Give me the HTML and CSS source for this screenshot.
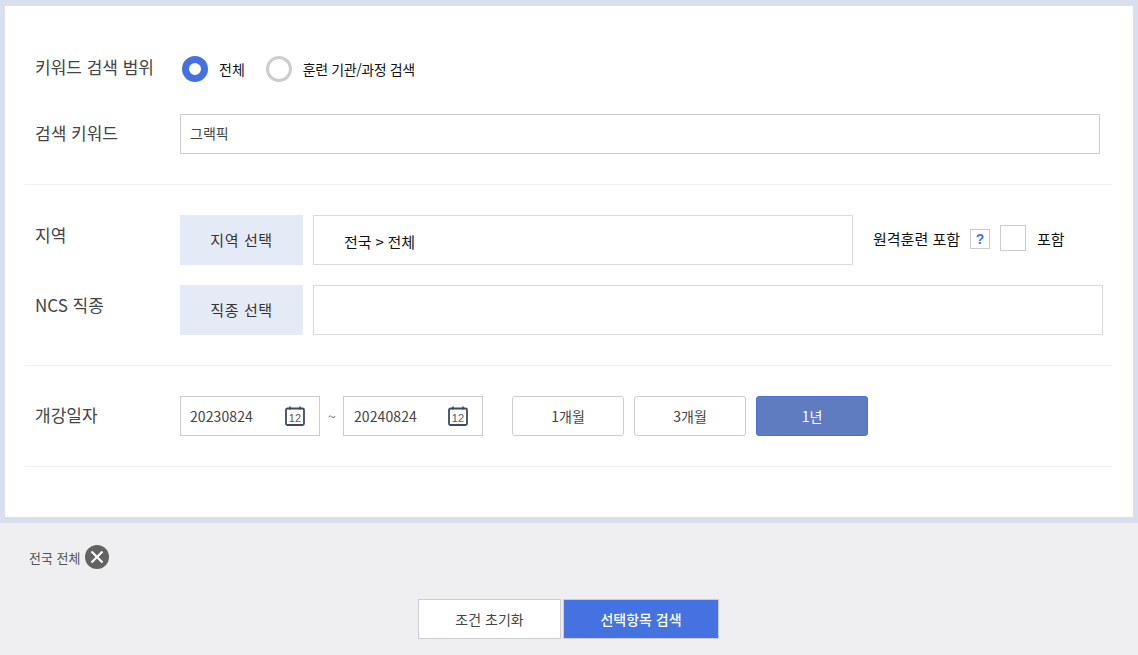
FILE: index.html
```html
<!DOCTYPE html>
<html lang="ko">
<head>
<meta charset="utf-8">
<title>검색</title>
<link rel="stylesheet" href="styles.css">
</head>
<body>
<main class="panel">
  <section class="group group-keyword">
    <div class="row row-scope">
      <div class="label">키워드 검색 범위</div>
      <div class="radios">
        <span class="radio radio-on"></span><span class="radio-text">전체</span>
        <span class="radio radio-off"></span><span class="radio-text radio-text-long">훈련 기관/과정 검색</span>
      </div>
    </div>
    <div class="row row-keyword">
      <div class="label">검색 키워드</div>
      <div class="input input-keyword"><span class="input-text">그랙픽</span></div>
    </div>
  </section>
  <section class="group group-region">
    <div class="row row-region">
      <div class="label label-top">지역</div>
      <div class="pick"><span class="pick-text">지역 선택</span></div>
      <div class="field field-region"><span class="field-text">전국 &gt; 전체</span></div>
      <div class="remote">
        <span>원격훈련 포함</span>
        <span class="help">?</span>
        <span class="check"></span>
        <span class="check-text">포함</span>
      </div>
    </div>
    <div class="row row-ncs">
      <div class="label label-top">NCS 직종</div>
      <div class="pick"><span class="pick-text">직종 선택</span></div>
      <div class="field field-ncs"></div>
    </div>
  </section>
  <section class="group group-date">
    <div class="row">
      <div class="label">개강일자</div>
      <div class="date">
        <span>20230824</span>
        <svg class="cal" viewBox="0 0 20 20" width="20" height="20"><rect x="1" y="2.500" width="18" height="16.500" rx="1.500" fill="none" stroke="#3f4a61" stroke-width="1.800"/><path d="M5 .5v3M15 .5v3" stroke="#3f4a61" stroke-width="1.600"/><text x="10" y="15.500" text-anchor="middle" class="cal-num">12</text></svg>
      </div>
      <span class="tilde">~</span>
      <div class="date date-second">
        <span>20240824</span>
        <svg class="cal" viewBox="0 0 20 20" width="20" height="20"><rect x="1" y="2.500" width="18" height="16.500" rx="1.500" fill="none" stroke="#3f4a61" stroke-width="1.800"/><path d="M5 .5v3M15 .5v3" stroke="#3f4a61" stroke-width="1.600"/><text x="10" y="15.500" text-anchor="middle" class="cal-num">12</text></svg>
      </div>
      <div class="periods">
        <div class="period">1개월</div>
        <div class="period">3개월</div>
        <div class="period period-on">1년</div>
      </div>
    </div>
  </section>
</main>
<footer class="foot">
  <div class="tag">
    <span>전국 전체</span>
    <svg class="tag-x" viewBox="0 0 24 24" width="24" height="24"><circle cx="12" cy="12" r="12" fill="#636363"/><path d="M6.500 6.500l11 11M17.500 6.500l-11 11" stroke="#fff" stroke-width="2.200"/></svg>
  </div>
  <div class="actions">
    <div class="btn btn-reset">조건 초기화</div>
    <div class="btn btn-search">선택항목 검색</div>
  </div>
</footer>
</body>
</html>
```

FILE: styles.css
```css
* { box-sizing: border-box; }
html, body { margin: 0; padding: 0; }
body {
  width: 1138px;
  height: 655px;
  overflow: hidden;
  background: #efeff2;
  font-family: "Noto Sans CJK KR", "Noto Sans", sans-serif;
  color: #111;
  font-size: 14px;
}
.panel {
  height: 523px;
  border: solid #d9dfec;
  border-width: 6px 5px;
  background: #fff;
  padding: 0 21px 0 20px;
}
.group { border-bottom: 1px solid #f0f1f3; }
.group-keyword { height: 179px; padding-top: 42px; }
.group-region { height: 181px; padding-top: 30px; }
.group-date { height: 101px; padding-top: 30px; }
.row { display: flex; align-items: center; }
.row-scope { height: 40px; margin-bottom: 26px; }
.row-region { height: 50px; margin-bottom: 20px; }
.row-ncs { height: 50px; }
.label {
  width: 155px;
  flex: none;
  padding: 0 0 4px 10px;
  font-size: 17px;
  color: #444;
}
.label-top { align-self: flex-start; padding: 7px 0 0 10px; }
.radios { display: flex; align-items: center; margin-top: 1px; }
.radio {
  width: 26px;
  height: 26px;
  border-radius: 50%;
  flex: none;
}
.radio-on { margin-left: 2px; border: 7px solid #4472e0; background: #fff; }
.radio-off { border: 3px solid #cccdd1; background: #fff; margin-left: 21px; }
.radio-text { margin-left: 11px; font-size: 14px; color: #111; }
.radio-text-long { letter-spacing: -0.4px; }
.input {
  width: 920px;
  height: 40px;
  border: 1px solid #ccc;
  display: flex;
  align-items: center;
  padding-left: 9px;
  font-size: 14px;
  color: #444;
}
.input-text { padding-bottom: 2px; }
.pick {
  width: 123px;
  height: 50px;
  background: #e4ebf7;
  display: flex;
  align-items: center;
  justify-content: center;
  font-size: 15px;
  letter-spacing: 0.6px;
  color: #333;
  flex: none;
}
.pick-text { padding-bottom: 2px; }
.field {
  height: 50px;
  margin-left: 10px;
  border: 1px solid #d9d9d9;
  display: flex;
  align-items: center;
  font-size: 15px;
}
.field-text { padding-top: 2px; word-spacing: -0.4px; }
.field-region { width: 540px; padding-left: 30px; }
.field-ncs { width: 790px; }
.remote {
  display: flex;
  align-items: center;
  margin-left: 20px;
  font-size: 15px;
  margin-top: -4px;
}
.help {
  width: 20px;
  height: 20px;
  margin: 2px 0 0 10px;
  border: 1px solid #ccc;
  display: flex;
  align-items: center;
  justify-content: center;
  font-family: "Liberation Sans", sans-serif;
  font-weight: 700;
  font-size: 14px;
  color: #4472e0;
}
.check {
  width: 26px;
  height: 26px;
  margin-left: 10px;
  border: 1px solid #ccc;
}
.check-text { margin-left: 11px; }
.date {
  width: 140px;
  height: 40px;
  border: 1px solid #ccc;
  display: flex;
  align-items: center;
  justify-content: space-between;
  padding: 0 14px 0 9px;
  font-size: 14px;
  letter-spacing: 0.1px;
  color: #444;
  flex: none;
}
.date-second { padding-left: 10px; }
.cal { display: block; }
.cal-num { font-family: "Liberation Sans", sans-serif; font-size: 11px; fill: #555; }
.tilde { width: 23px; padding-left: 1px; text-align: center; color: #666; font-size: 14px; }
.periods { display: flex; gap: 10px; margin-left: 29px; }
.period {
  width: 112px;
  height: 40px;
  border: 1px solid #ccc;
  border-radius: 3px;
  display: flex;
  align-items: center;
  justify-content: center;
  font-size: 14px;
  color: #444;
}
.period-on { background: #5f7cc1; border-color: #4472e0; color: #fff; }
.foot { padding: 22px 0 0 29px; }
.tag {
  display: flex;
  align-items: center;
  gap: 5px;
  font-size: 13px;
  color: #555;
  height: 24px;
}
.tag-x { display: block; }
.actions {
  display: flex;
  justify-content: center;
  gap: 2px;
  margin-top: 30px;
  padding-right: 31px;
}
.btn {
  height: 40px;
  border: 1px solid #cdcdd3;
  display: flex;
  align-items: center;
  justify-content: center;
  padding-left: 1px;
  font-size: 14px;
}
.btn-reset { width: 143px; background: #fff; color: #444; }
.btn-search { width: 156px; background: #4472e0; color: #fff; font-weight: 500; }
```
